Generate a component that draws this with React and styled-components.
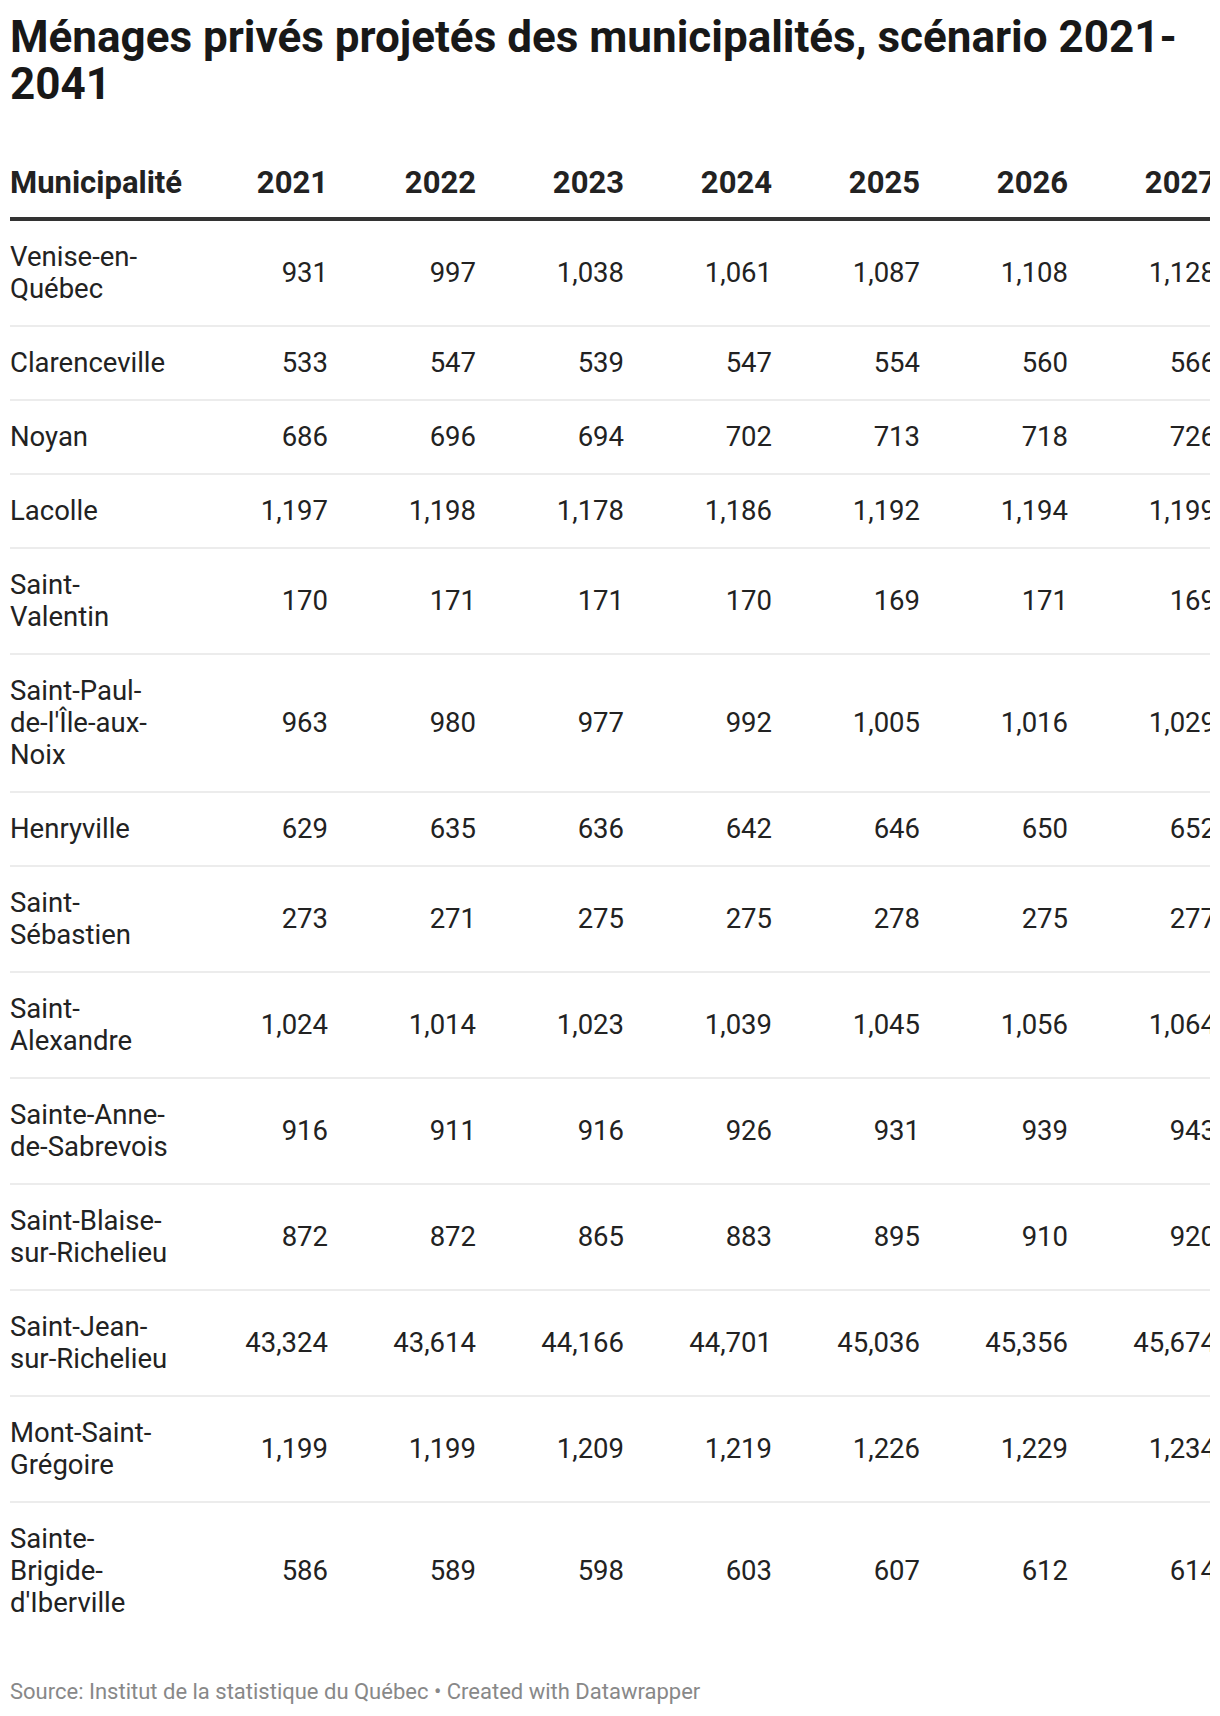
import React from 'react'
import styled, { createGlobalStyle } from 'styled-components'

const GlobalStyle = createGlobalStyle`
  body {
    margin: 0;
    background: #fff;
    font-family: Roboto, "Liberation Sans", sans-serif;
  }
`

const Wrapper = styled.div`
  width: 1220px;
  padding: 0 10px;
  box-sizing: border-box;
  color: #222;
`
const Title = styled.h1`
  margin: 0;
  padding-top: 14px;
  font-size: 44px;
  line-height: 47px;
  font-weight: 700;
  color: #181818;
`
const Scroller = styled.div`
  overflow: hidden;
  margin-top: 49px;
`
const Table = styled.table`
  border-collapse: collapse;
  table-layout: fixed;
  width: ${p => 170 + p.cols * 148}px;
`
const HeadCell = styled.th`
  font-size: 31px;
  font-weight: 700;
  line-height: 36px;
  color: #222;
  text-align: ${p => (p.left ? 'left' : 'right')};
  padding: 8px ${p => (p.left ? '8px' : '0')} 16px 0;
  border-bottom: 4px solid #333;
  vertical-align: bottom;
`
const Row = styled.tr`
  border-bottom: ${p => (p.last ? 'none' : '2px solid #ececec')};
`
const NameCell = styled.td`
  font-size: 27.5px;
  line-height: 32px;
  padding: 20px 8px 20px 0;
  vertical-align: middle;
  word-wrap: break-word;
`
const NumCell = styled.td`
  font-size: 27.5px;
  line-height: 32px;
  padding: 20px 0;
  text-align: right;
  vertical-align: middle;
  white-space: nowrap;
`
const Footer = styled.div`
  margin-top: 39px;
  font-size: 22px;
  line-height: 28px;
  color: #888;
`

const years = ['2021', '2022', '2023', '2024', '2025', '2026', '2027']

const rows = [
  ['Venise-en-Québec', 931, 997, 1038, 1061, 1087, 1108, 1128],
  ['Clarenceville', 533, 547, 539, 547, 554, 560, 566],
  ['Noyan', 686, 696, 694, 702, 713, 718, 726],
  ['Lacolle', 1197, 1198, 1178, 1186, 1192, 1194, 1199],
  ['Saint-Valentin', 170, 171, 171, 170, 169, 171, 169],
  ["Saint-Paul-de-l'Île-aux-Noix", 963, 980, 977, 992, 1005, 1016, 1029],
  ['Henryville', 629, 635, 636, 642, 646, 650, 652],
  ['Saint-Sébastien', 273, 271, 275, 275, 278, 275, 277],
  ['Saint-Alexandre', 1024, 1014, 1023, 1039, 1045, 1056, 1064],
  ['Sainte-Anne-de-Sabrevois', 916, 911, 916, 926, 931, 939, 943],
  ['Saint-Blaise-sur-Richelieu', 872, 872, 865, 883, 895, 910, 920],
  ['Saint-Jean-sur-Richelieu', 43324, 43614, 44166, 44701, 45036, 45356, 45674],
  ['Mont-Saint-Grégoire', 1199, 1199, 1209, 1219, 1226, 1229, 1234],
  ["Sainte-Brigide-d'Iberville", 586, 589, 598, 603, 607, 612, 614],
]

const fmt = n => n.toLocaleString('en-US')

export default function App() {
  return (
    <Wrapper>
      <GlobalStyle />
      <Title>Ménages privés projetés des municipalités, scénario 2021-2041</Title>
      <Scroller>
        <Table cols={years.length}>
          <colgroup>
            <col style={{ width: 170 }} />
            {years.map(y => <col key={y} style={{ width: 148 }} />)}
          </colgroup>
          <thead>
            <tr>
              <HeadCell left>Municipalité</HeadCell>
              {years.map(y => <HeadCell key={y}>{y}</HeadCell>)}
            </tr>
          </thead>
          <tbody>
            {rows.map((r, i) => (
              <Row key={r[0]} last={i === rows.length - 1}>
                <NameCell>{r[0]}</NameCell>
                {r.slice(1).map((v, j) => <NumCell key={j}>{fmt(v)}</NumCell>)}
              </Row>
            ))}
          </tbody>
        </Table>
      </Scroller>
      <Footer>Source: Institut de la statistique du Québec • Created with Datawrapper</Footer>
    </Wrapper>
  )
}
